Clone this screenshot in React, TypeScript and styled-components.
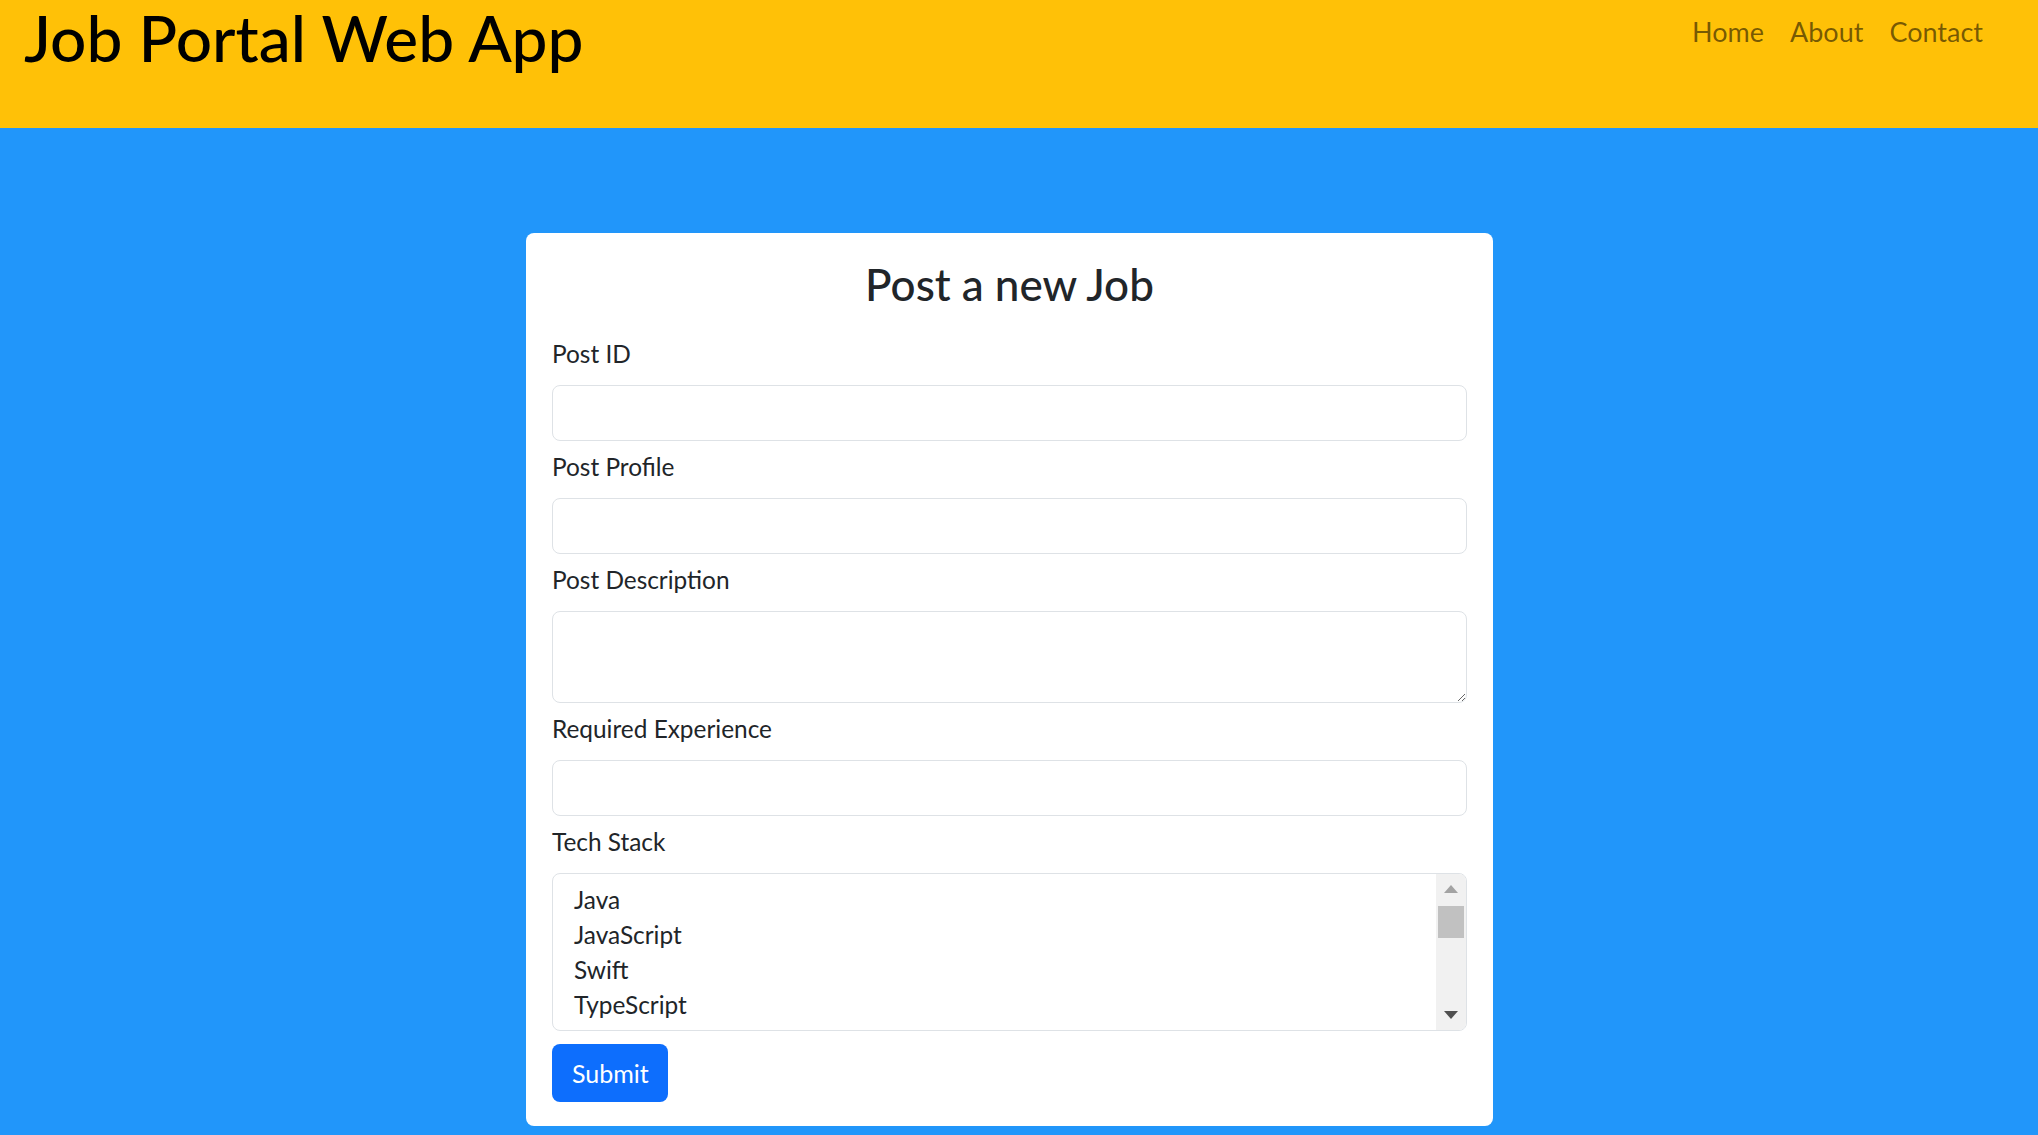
import React from "react";
import styled, { createGlobalStyle } from "styled-components";

const GlobalStyle = createGlobalStyle`
  html, body {
    margin: 0;
    padding: 0;
    background: #2196fa;
  }
  body {
    font-family: Lato, "Open Sans", sans-serif;
    color: #212529;
    min-height: 100vh;
  }
  *, *::before, *::after {
    box-sizing: border-box;
  }
`;

const Header = styled.header`
  height: 128px;
  background: #ffc107;
  display: flex;
  justify-content: space-between;
  align-items: flex-start;
  padding: 0 55px 0 24px;
`;

const Brand = styled.h1`
  margin: 0;
  font-size: 64px;
  line-height: 1.2;
  font-weight: 500;
  color: #000;
`;

const Nav = styled.nav`
  display: flex;
  gap: 26px;
  margin-top: 18px;
`;

const NavLink = styled.a`
  font-size: 27px;
  line-height: 1;
  color: rgba(0, 0, 0, 0.55);
  text-decoration: none;
`;

const Main = styled.main`
  padding: 105px 0 10px 526px;
`;

const Card = styled.form`
  width: 967px;
  background: #fff;
  border-radius: 8px;
  padding: 25px 26px 24px;
  display: flex;
  flex-direction: column;
`;

const Title = styled.h2`
  margin: 0 0 24px;
  text-align: center;
  font-size: 44px;
  line-height: 1.2;
  font-weight: 500;
  color: #212529;
`;

const Field = styled.div`
  display: flex;
  flex-direction: column;
  margin-bottom: 7px;
`;

const Label = styled.label`
  font-size: 24.4px;
  line-height: 38px;
  margin-bottom: 12px;
  color: #212529;
`;

const controlBase = `
  width: 100%;
  border: 1px solid #dee2e6;
  border-radius: 8px;
  background: #fff;
  font-family: Lato, "Open Sans", sans-serif;
  font-size: 24.4px;
  color: #212529;
  padding: 8px 20px;
  outline: none;
  display: block;
`;

const Input = styled.input`
  ${controlBase}
  height: 56px;
`;

const TextArea = styled.textarea`
  ${controlBase}
  height: 92px;
  resize: vertical;
`;

const ListBox = styled.div`
  height: 158px;
  border: 1px solid #dee2e6;
  border-radius: 8px;
  overflow: hidden;
  display: flex;
  background: #fff;
`;

const OptionList = styled.div`
  flex: 1;
  padding: 8px 21px;
  display: flex;
  flex-direction: column;
`;

const OptionItem = styled.div`
  font-size: 24.4px;
  line-height: 35px;
  color: #212529;
`;

const ScrollTrack = styled.div`
  width: 30px;
  background: #f1f1f1;
  display: flex;
  flex-direction: column;
`;

const ScrollButton = styled.div`
  height: 30px;
  display: flex;
  align-items: center;
  justify-content: center;
`;

const ArrowUp = styled.span`
  width: 0;
  height: 0;
  border-left: 7.5px solid transparent;
  border-right: 7.5px solid transparent;
  border-bottom: 8px solid #a3a3a3;
`;

const ArrowDown = styled.span`
  width: 0;
  height: 0;
  border-left: 7.5px solid transparent;
  border-right: 7.5px solid transparent;
  border-top: 8px solid #505050;
`;

const Thumb = styled.div`
  height: 32px;
  margin: 2px 2px 0;
  background: #c1c1c1;
`;

const TrackSpace = styled.div`
  flex: 1;
`;

const SubmitButton = styled.button`
  align-self: flex-start;
  margin-top: 6px;
  width: 116px;
  height: 58px;
  padding: 0 20px;
  border: none;
  border-radius: 8px;
  background: #0d6efd;
  color: #fff;
  font-family: Lato, "Open Sans", sans-serif;
  font-size: 25px;
  cursor: pointer;
`;

const techs = ["Java", "JavaScript", "Swift", "TypeScript"];

export default function App() {
  return (
    <>
      <GlobalStyle />
      <Header>
        <Brand>Job Portal Web App</Brand>
        <Nav>
          <NavLink href="#">Home</NavLink>
          <NavLink href="#">About</NavLink>
          <NavLink href="#">Contact</NavLink>
        </Nav>
      </Header>
      <Main>
        <Card onSubmit={(e) => e.preventDefault()}>
          <Title>Post a new Job</Title>
          <Field>
            <Label htmlFor="postId">Post ID</Label>
            <Input id="postId" type="text" />
          </Field>
          <Field>
            <Label htmlFor="postProfile">Post Profile</Label>
            <Input id="postProfile" type="text" />
          </Field>
          <Field>
            <Label htmlFor="postDesc">Post Description</Label>
            <TextArea id="postDesc" />
          </Field>
          <Field>
            <Label htmlFor="reqExp">Required Experience</Label>
            <Input id="reqExp" type="text" />
          </Field>
          <Field>
            <Label>Tech Stack</Label>
            <ListBox role="listbox" aria-multiselectable="true">
              <OptionList>
                {techs.map((t) => (
                  <OptionItem key={t} role="option">
                    {t}
                  </OptionItem>
                ))}
              </OptionList>
              <ScrollTrack>
                <ScrollButton>
                  <ArrowUp />
                </ScrollButton>
                <Thumb />
                <TrackSpace />
                <ScrollButton>
                  <ArrowDown />
                </ScrollButton>
              </ScrollTrack>
            </ListBox>
          </Field>
          <SubmitButton type="submit">Submit</SubmitButton>
        </Card>
      </Main>
    </>
  );
}
